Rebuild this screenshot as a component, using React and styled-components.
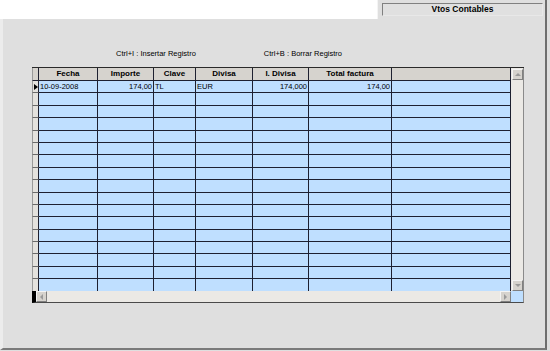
import React from "react";
import styled, { createGlobalStyle } from "styled-components";

const Global = createGlobalStyle`
  html, body { margin: 0; padding: 0; background: #ffffff; }
  body { width: 550px; height: 351px; overflow: hidden; font-family: "Liberation Sans", Arial, sans-serif; }
`;

const Screen = styled.div`
  width: 550px;
  height: 351px;
  display: flex;
  flex-direction: column;
  background: #ffffff;
`;

const TopBar = styled.div`
  height: 19px;
  display: flex;
`;

const Blank = styled.div`
  flex: 1;
  background: #ffffff;
`;

const Edge = styled.div`
  width: 3px;
  background: #dfdfdf;
`;

const TabArea = styled.div`
  width: 170px;
  background: #dfdfdf;
  box-sizing: border-box;
  padding: 3px 2px 0 4px;
  border-right: 2px solid #6e6e6e;
  border-left: 1px solid #f4f4f4;
`;

const Tab = styled.div`
  height: 13px;
  box-sizing: border-box;
  border: 1px solid #808080;
  border-right-color: #e8e8e8;
  border-bottom-color: #e8e8e8;
  background: #e0e0e0;
  font-weight: bold;
  font-size: 8.5px;
  line-height: 11px;
  text-align: center;
  color: #000;
`;

const Body = styled.div`
  flex: 1;
  display: flex;
  background: #dfdfdf;
`;

const Panel = styled.div`
  flex: 1;
  background: #dfdfdf;
  box-sizing: border-box;
  border-left: 3px solid #ececec;
  border-right: 2px solid #6e6e6e;
  border-bottom: 2px solid #7a7a7a;
  margin-bottom: 1px;
  padding: 30px 0 0 29px;
`;

const Hints = styled.div`
  display: flex;
  font-size: 7.5px;
  color: #000;
  padding-left: 84px;
  gap: 68px;
  height: 18px;
  line-height: 9px;
`;

const Grid = styled.div`
  width: 492px;
  display: flex;
  flex-direction: column;
  box-sizing: border-box;
  border-top: 1px solid #2a2a2a;
`;

const BodyRow = styled.div`
  display: flex;
  height: 223px;
`;

const Table = styled.div`
  width: 479px;
  display: grid;
  grid-template-columns: 7px 59px 56px 42px 57px 56px 83px 119px;
  grid-template-rows: 13px repeat(17, 12.4px);
  overflow: hidden;
`;

const Cell = styled.div`
  box-sizing: border-box;
  border-right: 1px solid #1e2030;
  border-bottom: 1px solid #1e2030;
  background: ${(p) => (p.$head ? "#d6d3ce" : "#bfdfff")};
  font-size: ${(p) => (p.$head ? "8px" : "7.5px")};
  font-weight: ${(p) => (p.$head ? "bold" : "normal")};
  text-align: ${(p) => p.$align || "left"};
  line-height: 11px;
  padding: 0 1px;
  white-space: nowrap;
  overflow: hidden;
  color: #000;
`;

const Indicator = styled.div`
  box-sizing: border-box;
  border-left: 1px solid #9a9a9a;
  border-right: 1px solid #1e2030;
  border-bottom: 1px solid ${(p) => (p.$head ? "#1e2030" : "#6a6a6a")};
  background: ${(p) => (p.$head ? "#d6d3ce" : "#e4e2de")};
  position: relative;
`;

const Arrow = styled.div`
  position: absolute;
  left: 1px;
  top: 3px;
  width: 0;
  height: 0;
  border-top: 3px solid transparent;
  border-bottom: 3px solid transparent;
  border-left: 4px solid #000;
`;

const VScroll = styled.div`
  width: 13px;
  background: #ebe9e5;
  display: flex;
  flex-direction: column;
  justify-content: space-between;
  box-sizing: border-box;
  border-right: 1px solid #8a8a8a;
  padding-top: 1px;
`;

const ScrollBtn = styled.div`
  width: 11px;
  height: 11px;
  box-sizing: border-box;
  background: #d6d3ce;
  border: 1px solid #f4f4f4;
  border-right-color: #808080;
  border-bottom-color: #808080;
  display: flex;
  align-items: center;
  justify-content: center;
  margin-left: 1px;
`;

const Tri = styled.div`
  width: 0;
  height: 0;
  ${(p) =>
    p.$dir === "up"
      ? "border-left:3px solid transparent;border-right:3px solid transparent;border-bottom:3px solid #9a9a9a;"
      : p.$dir === "down"
      ? "border-left:3px solid transparent;border-right:3px solid transparent;border-top:3px solid #9a9a9a;"
      : p.$dir === "left"
      ? "border-top:3px solid transparent;border-bottom:3px solid transparent;border-right:3px solid #9a9a9a;"
      : "border-top:3px solid transparent;border-bottom:3px solid transparent;border-left:3px solid #9a9a9a;"}
`;

const HRow = styled.div`
  display: flex;
  height: 12px;
`;

const HScroll = styled.div`
  width: 479px;
  display: flex;
  justify-content: space-between;
  align-items: flex-start;
  background: #ebe9e5;
  box-sizing: border-box;
  border-left: 4px solid #000;
  border-bottom: 1px solid #4a4a4a;
`;

const HBtn = styled(ScrollBtn)`
  margin-left: 0;
`;

const Corner = styled.div`
  width: 13px;
  background: #bfdfff;
  box-sizing: border-box;
  border-right: 1px solid #8a8a8a;
  border-bottom: 1px solid #4a4a4a;
`;

const headers = ["Fecha", "Importe", "Clave", "Divisa", "I. Divisa", "Total factura", ""];
const first = [
  ["10-09-2008", "left"],
  ["174,00", "right"],
  ["TL", "left"],
  ["EUR", "left"],
  ["174,000", "right"],
  ["174,00", "right"],
  ["", "left"],
];

export default function App() {
  const rows = Array.from({ length: 17 }, (_, i) => i);
  return (
    <>
      <Global />
      <Screen>
        <TopBar>
          <Blank />
          <TabArea>
            <Tab>Vtos Contables</Tab>
          </TabArea>
          <Edge />
        </TopBar>
        <Body>
          <Panel>
            <Hints>
              <span>Ctrl+I : Insertar Registro</span>
              <span>Ctrl+B : Borrar Registro</span>
            </Hints>
            <Grid>
              <BodyRow>
                <Table>
                  <Indicator $head />
                  {headers.map((h, i) => (
                    <Cell key={"h" + i} $head $align="center">
                      {h}
                    </Cell>
                  ))}
                  {rows.map((r) => (
                    <React.Fragment key={r}>
                      <Indicator>{r === 0 && <Arrow />}</Indicator>
                      {first.map(([t, a], c) => (
                        <Cell key={c} $align={a}>
                          {r === 0 ? t : ""}
                        </Cell>
                      ))}
                    </React.Fragment>
                  ))}
                </Table>
                <VScroll>
                  <ScrollBtn>
                    <Tri $dir="up" />
                  </ScrollBtn>
                  <ScrollBtn>
                    <Tri $dir="down" />
                  </ScrollBtn>
                </VScroll>
              </BodyRow>
              <HRow>
                <HScroll>
                  <HBtn>
                    <Tri $dir="left" />
                  </HBtn>
                  <HBtn>
                    <Tri $dir="right" />
                  </HBtn>
                </HScroll>
                <Corner />
              </HRow>
            </Grid>
          </Panel>
          <Edge />
        </Body>
      </Screen>
    </>
  );
}
